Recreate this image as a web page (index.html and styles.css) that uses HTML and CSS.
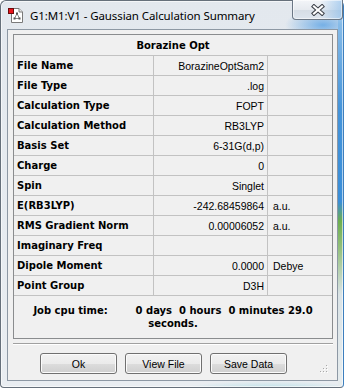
FILE: index.html
```html
<!DOCTYPE html>
<html lang="en">
<head>
    <meta charset="UTF-8">
    <title>Gaussian Calculation Summary</title>
    <link rel="stylesheet" href="styles.css">
</head>
<body>
    <div class="window">
        <!-- Title bar -->
        <div class="titlebar">
            <svg class="app-icon" width="16" height="16" viewBox="0 0 16 16">
                <path d="M3.5 1.5 H11 L14.5 5 V15.5 H3.5 Z" fill="#fff" stroke="#7a7a7a"/>
                <path d="M11 1.5 V5 H14.5" fill="#e8e8e8" stroke="#7a7a7a"/>
                <path d="M9 6.5 L6.5 11.5 M9 6.5 L11.5 11.5 M6.5 11.5 H11.5" stroke="#8a8a8a" fill="none"/>
                <rect x="8" y="5.5" width="2" height="2" fill="#555"/>
                <rect x="5.5" y="10.5" width="2" height="2" fill="#555"/>
                <rect x="10.5" y="10.5" width="2" height="2" fill="#555"/>
                <rect x="0.5" y="1.5" width="5" height="5" fill="#e8141b" stroke="#6d0a0a"/>
            </svg>
            <span class="title">G1:M1:V1 - Gaussian Calculation Summary</span>
            <div class="close-btn">
                <svg width="14" height="12" viewBox="0 0 14 12">
                    <path d="M3 2.5 L11 9.5 M11 2.5 L3 9.5" stroke="#3c4048" stroke-width="4.2" stroke-linecap="square"/>
                    <path d="M3 2.5 L11 9.5 M11 2.5 L3 9.5" stroke="#fff" stroke-width="2.2" stroke-linecap="square"/>
                </svg>
            </div>
        </div>

        <!-- Client area -->
        <div class="client">
            <div class="summary">
                <div class="cell head">Borazine Opt</div>

                <div class="cell label">File Name</div>
                <div class="cell value">BorazineOptSam2</div>
                <div class="cell unit"></div>

                <div class="cell label">File Type</div>
                <div class="cell value">.log</div>
                <div class="cell unit"></div>

                <div class="cell label">Calculation Type</div>
                <div class="cell value">FOPT</div>
                <div class="cell unit"></div>

                <div class="cell label">Calculation Method</div>
                <div class="cell value">RB3LYP</div>
                <div class="cell unit"></div>

                <div class="cell label">Basis Set</div>
                <div class="cell value">6-31G(d,p)</div>
                <div class="cell unit"></div>

                <div class="cell label">Charge</div>
                <div class="cell value">0</div>
                <div class="cell unit"></div>

                <div class="cell label">Spin</div>
                <div class="cell value">Singlet</div>
                <div class="cell unit"></div>

                <div class="cell label">E(RB3LYP)</div>
                <div class="cell value">-242.68459864</div>
                <div class="cell unit">a.u.</div>

                <div class="cell label">RMS Gradient Norm</div>
                <div class="cell value">0.00006052</div>
                <div class="cell unit">a.u.</div>

                <div class="cell label">Imaginary Freq</div>
                <div class="cell value"></div>
                <div class="cell unit"></div>

                <div class="cell label">Dipole Moment</div>
                <div class="cell value">0.0000</div>
                <div class="cell unit">Debye</div>

                <div class="cell label">Point Group</div>
                <div class="cell value">D3H</div>
                <div class="cell unit"></div>

                <div class="cell cpu">Job cpu time:        0 days  0 hours  0 minutes 29.0 seconds.</div>
            </div>

            <div class="separator"></div>

            <div class="buttons">
                <button>Ok</button>
                <button>View File</button>
                <button>Save Data</button>
            </div>

            <svg class="grip" width="10" height="10" viewBox="0 0 10 10">
                <rect x="7" y="1" width="1" height="1" fill="#a9a9a9"/>
                <rect x="7" y="4" width="1" height="1" fill="#a9a9a9"/>
                <rect x="4" y="4" width="1" height="1" fill="#a9a9a9"/>
                <rect x="7" y="7" width="1" height="1" fill="#a9a9a9"/>
                <rect x="4" y="7" width="1" height="1" fill="#a9a9a9"/>
                <rect x="1" y="7" width="1" height="1" fill="#a9a9a9"/>
                <rect x="8" y="2" width="1" height="1" fill="#fff"/>
                <rect x="8" y="5" width="1" height="1" fill="#fff"/>
                <rect x="5" y="5" width="1" height="1" fill="#fff"/>
                <rect x="8" y="8" width="1" height="1" fill="#fff"/>
                <rect x="5" y="8" width="1" height="1" fill="#fff"/>
                <rect x="2" y="8" width="1" height="1" fill="#fff"/>
            </svg>
        </div>
    </div>
</body>
</html>
```

FILE: styles.css
```css
body {
    margin: 0;
    background-color: #ffffff;
    font-family: "Liberation Sans", Arial, sans-serif;
    color: #000;
}

/* Window frame */
.window {
    width: 344px;
    height: 388px;
    box-sizing: border-box;
    display: flex;
    flex-direction: column;
    padding: 0 5px 6px 6px;
    border: 1px solid #66707b;
    border-right-color: #3d7fbe;
    border-radius: 6px 6px 4px 4px;
    box-shadow: inset 0 0 0 1px rgba(255, 255, 255, 0.6);
    background:
        linear-gradient(to bottom, #c9def1 0%, #86bbe8 6%, #4594da 28%, #3a8ed8 52%, #6cae4f 57%, #94c07c 64%, #dae3e6 76%, #e6ecee 100%) right top / 5px 100% no-repeat,
        radial-gradient(38px 16px at 322px 24px, rgba(90, 162, 228, 0.8), rgba(90, 162, 228, 0)),
        radial-gradient(90px 8px at 270px 388px, rgba(150, 215, 225, 0.6), rgba(150, 215, 225, 0)),
        linear-gradient(to bottom, #e3e8ee, #e9edf1);
}

.titlebar {
    height: 28px;
    display: flex;
    align-items: center;
    flex-shrink: 0;
}

.app-icon {
    flex-shrink: 0;
    margin-left: 1px;
}

.title {
    margin-left: 6px;
    font-family: "Noto Sans", "Open Sans", sans-serif;
    font-size: 11.5px;
    letter-spacing: -0.1px;
    color: #000;
    white-space: nowrap;
}

.close-btn {
    align-self: flex-start;
    margin-left: auto;
    margin-top: -1px;
    margin-right: -5px;
    width: 51px;
    height: 20px;
    box-sizing: border-box;
    display: flex;
    align-items: center;
    justify-content: center;
    border: 1px solid #6b7785;
    border-top: none;
    border-radius: 0 0 4px 4px;
    box-shadow: inset 0 0 0 1px rgba(255, 255, 255, 0.55);
    background:
        linear-gradient(to right, rgba(255, 255, 255, 0) 55%, rgba(120, 180, 235, 0.55) 100%),
        linear-gradient(to bottom, #f3f5f8 0%, #e6eaef 50%, #d6dde5 52%, #dde5ee 100%);
}

/* Client area */
.client {
    position: relative;
    height: 352px;
    box-sizing: border-box;
    display: flex;
    flex-direction: column;
    padding: 4px 4px 0 5px;
    border: 1px solid #8d98a4;
    background-color: #f0f0f0;
}

.summary {
    display: grid;
    grid-template-columns: 139px 113px 1fr;
    grid-template-rows: 20px repeat(12, 19px) 42px;
    gap: 1px;
    border: 1px solid #8a8c8e;
    background-color: #c2c2c2;
}

.cell {
    display: flex;
    align-items: center;
    background-color: #f0f0f0;
    font-size: 10.5px;
    white-space: nowrap;
}

.head,
.label,
.cpu {
    font-family: "DejaVu Sans", sans-serif;
    font-weight: bold;
    font-size: 10px;
}

.head {
    grid-column: 1 / -1;
    justify-content: center;
}

.label {
    padding-left: 3px;
}

.value {
    justify-content: flex-end;
    padding-right: 3px;
}

.unit {
    padding-left: 5px;
}

.cpu {
    grid-column: 1 / -1;
    justify-content: center;
    text-align: center;
    white-space: pre-wrap;
    line-height: 13px;
}

.separator {
    margin-top: 4px;
    border-top: 1px solid #a0a0a0;
    border-bottom: 1px solid #ffffff;
}

.buttons {
    display: flex;
    gap: 8px;
    margin-top: 8px;
    padding-left: 27px;
}

button {
    width: 77px;
    height: 21px;
    padding: 0;
    border: 1px solid #707070;
    border-radius: 3px;
    box-shadow: inset 0 0 0 1px #fbfbfb;
    background: linear-gradient(to bottom, #f2f2f2 0%, #ebebeb 50%, #dddddd 51%, #cfcfcf 100%);
    font-family: "Liberation Sans", Arial, sans-serif;
    font-size: 10.5px;
    color: #000;
}

.grip {
    position: absolute;
    right: 8px;
    bottom: 6px;
}
```
